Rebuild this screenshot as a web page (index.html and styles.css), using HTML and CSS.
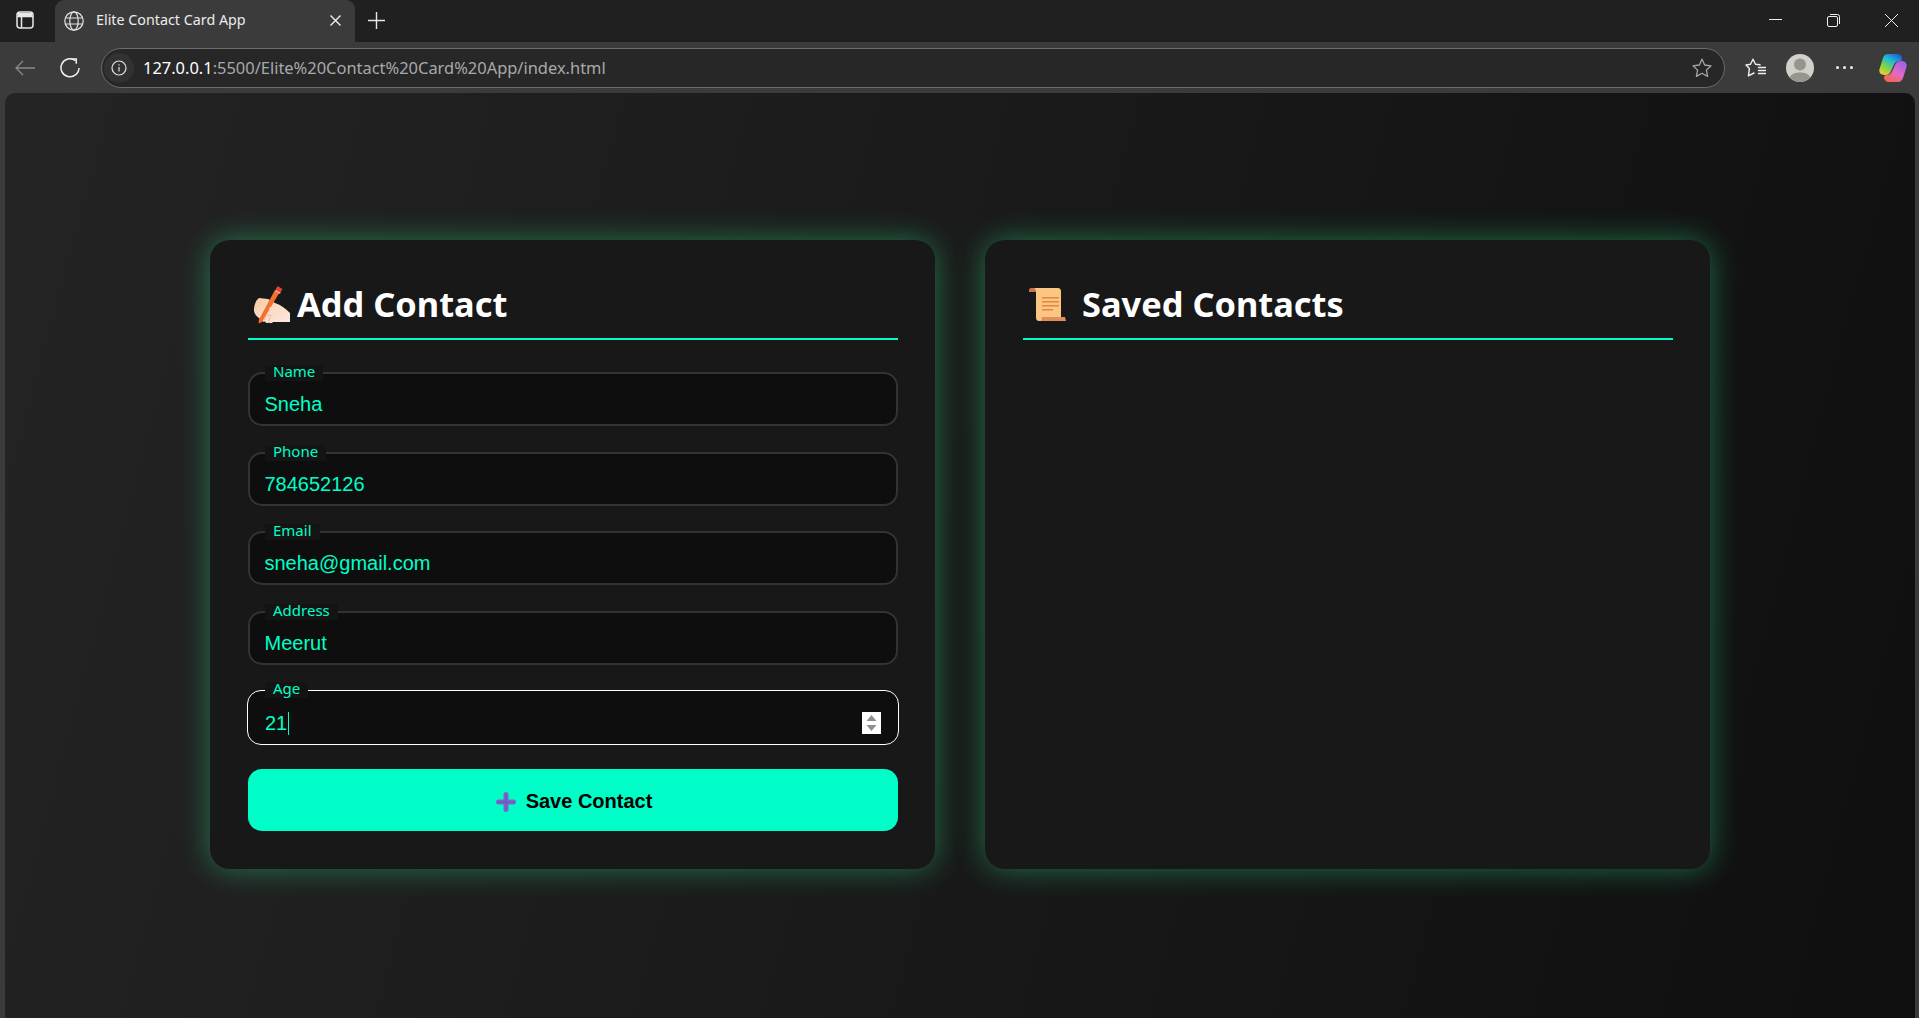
FILE: index.html
```html
<!DOCTYPE html>
<html lang="en">
<head>
    <meta charset="UTF-8">
    <meta name="viewport" content="width=device-width, initial-scale=1.0">
    <title>Elite Contact Card App</title>
    <link rel="stylesheet" href="styles.css">
</head>
<body>
    <!-- browser frame -->
    <div class="tabstrip">
        <svg class="ic-sidebar" width="18" height="18" viewBox="0 0 18 18" fill="none" stroke="#e8e8e8" stroke-width="1.5">
            <rect x="1" y="1" width="16" height="16" rx="3"/>
            <path d="M1 5.5h16M5.5 5.5V17" />
            <path d="M2 2h14v3H2z" fill="#e8e8e8" stroke="none"/>
        </svg>
        <div class="tab">
            <svg class="ic-globe" width="20" height="20" viewBox="0 0 20 20" fill="none" stroke="#e4e4e4" stroke-width="1.2">
                <circle cx="10" cy="10" r="9.2"/>
                <ellipse cx="10" cy="10" rx="4.2" ry="9.2"/>
                <path d="M1.5 7h17M1.5 13h17"/>
            </svg>
            <span class="tab-title">Elite Contact Card App</span>
            <svg class="ic-close" width="11" height="11" viewBox="0 0 11 11" stroke="#f0f0f0" stroke-width="1.4">
                <path d="M.5.5l10 10M10.5.5l-10 10"/>
            </svg>
        </div>
        <svg class="ic-plus" width="17" height="17" viewBox="0 0 17 17" stroke="#e8e8e8" stroke-width="1.4">
            <path d="M8.5 0v17M0 8.5h17"/>
        </svg>
        <div class="window-btns">
            <svg width="13" height="13" viewBox="0 0 13 13" stroke="#efefef" stroke-width="1"><path d="M0 5.5h13"/></svg>
            <svg width="13" height="13" viewBox="0 0 13 13" fill="none" stroke="#efefef" stroke-width="1"><rect x=".5" y="2.5" width="10" height="10" rx="1.5"/><path d="M3 .5h7.5a2 2 0 0 1 2 2V10"/></svg>
            <svg width="13" height="13" viewBox="0 0 13 13" stroke="#efefef" stroke-width="1"><path d="M0 0l13 13M13 0L0 13"/></svg>
        </div>
    </div>

    <div class="toolbar">
        <svg class="ic-back" width="20" height="16" viewBox="0 0 20 16" fill="none" stroke="#8a8a8a" stroke-width="1.3">
            <path d="M20 8H1M8 1L1 8l7 7"/>
        </svg>
        <svg class="ic-reload" width="20" height="20" viewBox="0 0 20 20" fill="none" stroke="#efefef" stroke-width="1.5">
            <path d="M15.5 2.6A9 9 0 1 0 19 10"/>
            <path d="M11.5 1h4.8v4.8"/>
        </svg>
        <div class="addressbar">
            <span class="info-wrap">
                <svg width="16" height="16" viewBox="0 0 16 16" fill="none" stroke="#e4e4e4" stroke-width="1.2">
                    <circle cx="8" cy="8" r="7"/>
                    <path d="M8 7v4.5M8 4.2v1.3"/>
                </svg>
            </span>
            <span class="url"><span class="url-host">127.0.0.1</span>:5500/Elite%20Contact%20Card%20App/index.html</span>
            <svg class="ic-star" width="20" height="20" viewBox="0 0 20 20" fill="none" stroke="#a8a8a8" stroke-width="1.3" stroke-linejoin="round">
                <path d="M10 1.2l2.7 5.8 6.3.8-4.6 4.3 1.2 6.3-5.6-3.1-5.6 3.1 1.2-6.3L1 7.8l6.3-.8z"/>
            </svg>
        </div>
        <svg class="ic-favs" width="21" height="20" viewBox="0 0 21 20" fill="none" stroke="#f0f0f0" stroke-width="1.4" stroke-linejoin="round" stroke-linecap="round">
            <path d="M15 6.8L10.5 6.2 8 1.2 5.5 6.2 1 7l3.4 3.600-1 7.200L9 15"/>
            <path d="M13.5 9.5h7M13.5 12.5h7M13.5 15.5h7"/>
        </svg>
        <svg class="ic-avatar" width="28" height="28" viewBox="0 0 28 28">
            <circle cx="14" cy="14" r="14" fill="#d2d0cb"/>
            <circle cx="14" cy="10.5" r="6" fill="#98948e"/>
            <path d="M3.5 23.3C6 19.5 9.500 18.500 14 18.500s8 1 10.500 4.800A14 14 0 0 1 3.500 23.300z" fill="#98948e"/>
        </svg>
        <div class="dots"><i></i><i></i><i></i></div>
        <svg class="ic-copilot" width="28" height="28" viewBox="0 0 28 28">
            <defs>
                <linearGradient id="copL" x1="0.8" y1="0" x2="0.15" y2="1">
                    <stop offset="0" stop-color="#1f5fe0"/>
                    <stop offset="0.35" stop-color="#22bcd0"/>
                    <stop offset="0.7" stop-color="#86d63f"/>
                    <stop offset="1" stop-color="#f5c92c"/>
                </linearGradient>
                <linearGradient id="copR" x1="0.85" y1="0" x2="0.15" y2="1">
                    <stop offset="0" stop-color="#9a5fe6"/>
                    <stop offset="0.5" stop-color="#e468c8"/>
                    <stop offset="1" stop-color="#f6673c"/>
                </linearGradient>
            </defs>
            <path d="M9 0h9c3 0 5 2 5 4.5 0 1.5-1 2.5-2.5 2.5-2.5 0-4.5 1-5.5 3.5L12 17c-1 2.5-3 4-5.5 4H5c-3.5 0-5.5-3-4.5-6L4 4c1-2.5 2.5-4 5-4z" fill="url(#copL)"/>
            <path d="M19 28h-9c-3 0-5-2-5-4.5C5 22 6 21 7.5 21c2.5 0 4.5-1 5.5-3.5L16 11c1-2.5 3-4 5.5-4H23c3.5 0 5.5 3 4.5 6L24 24c-1 2.5-2.500 4-5 4z" fill="url(#copR)"/>
        </svg>
    </div>

    <!-- page -->
    <main class="page">
        <section class="card">
            <h2 class="card-title">
                <svg class="emoji" width="49" height="40" viewBox="0 0 49 40">
                    <defs>
                        <linearGradient id="skin" x1="0" y1="0" x2="1" y2="1">
                            <stop offset="0" stop-color="#f8cba4"/>
                            <stop offset="1" stop-color="#fde9e2"/>
                        </linearGradient>
                    </defs>
                    <path d="M6 25c0-5 2-10 5-12l9 1 7 4c6 2 11 6 15 10v9H25c-1 1.500-3 1.500-4 .5-1.500 1-3.500.5-4-1-2 .5-4-.5-4.500-2.500C9 32 6 29 6 25z" fill="url(#skin)"/>
                    <path d="M11 34.500L27 5l4.500 2.500L14 37l-3.500 1.500z" fill="#f5702d"/>
                    <path d="M27.500 4.500l2-3.500 5 3-2 3.500z" fill="#e3402f"/>
                    <path d="M28 4.800l4.700 2.800-.8 1.300-4.700-2.800z" fill="#f1a49c"/>
                    <path d="M21 23c3-2 7-3 11-2-1 3-1 6 1 8-4 1-8 0-10-2z" fill="#fbdcc6"/>
                    <path d="M18 29c2 1.500 4 2 6 1.500M21 36l1-4M16.500 35l1-4" fill="none" stroke="#e9b79c" stroke-width="1"/>
                </svg>Add Contact
            </h2>

            <form class="contact-form">
                <fieldset class="field">
                    <legend>Name</legend>
                    <input type="text" value="Sneha">
                </fieldset>
                <fieldset class="field">
                    <legend>Phone</legend>
                    <input type="text" value="784652126">
                </fieldset>
                <fieldset class="field">
                    <legend>Email</legend>
                    <input type="text" value="sneha@gmail.com">
                </fieldset>
                <fieldset class="field">
                    <legend>Address</legend>
                    <input type="text" value="Meerut">
                </fieldset>
                <fieldset class="field field-focus">
                    <legend>Age</legend>
                    <div class="focus-value">
                        <span>21</span><span class="caret"></span>
                        <span class="spinner">
                            <svg width="19" height="22" viewBox="0 0 19 22" fill="#8f8f8f">
                                <path d="M9.5 3l5 6h-10zM4.5 13h10l-5 6z"/>
                            </svg>
                        </span>
                    </div>
                </fieldset>
                <button type="button" class="save-btn">
                    <svg width="20" height="20" viewBox="0 0 20 20" fill="none" stroke-linecap="round">
                        <path d="M10 2.5v15M2.5 10h15" stroke="#7a66c8" stroke-width="5"/>
                        <path d="M10 2.5v15M2.5 10h15" stroke="#6656bd" stroke-width="1"/>
                    </svg>
                    Save Contact
                </button>
            </form>
        </section>

        <section class="card">
            <h2 class="card-title">
                <svg class="emoji" width="59" height="40" viewBox="1 0 59 40">
                    <path d="M9 3c-1 0-2 1-2 2v2h7V3z" fill="#c9754f"/>
                    <path d="M12 3h24c1.5 0 3 1 3 3v30H17c-1.5 0-3-1-3-3V6c0-1-1-3-2-3z" fill="#fbc681"/>
                    <path d="M18 36h26l-1-4H20c0 2-1 4-2 4z" fill="#df8f5d"/>
                    <path d="M20 12h17v1.5H20zM20 16h17v1.5H20zM20 20h17v1.5H20zM20 24h11v1.5H20z" fill="#e28743"/>
                </svg>Saved Contacts
            </h2>
        </section>
    </main>
</body>
</html>
```

FILE: styles.css
```css
* {
    box-sizing: border-box;
}

html, body {
    height: 100%;
}

body {
    margin: 0;
    display: flex;
    flex-direction: column;
    background-color: #3b3b3b;
    font-family: "Noto Sans", sans-serif;
    overflow: hidden;
}

/* browser frame */

.tabstrip {
    height: 42px;
    flex: none;
    display: flex;
    align-items: center;
    background-color: #202020;
    padding-left: 16px;
}

.ic-sidebar {
    flex: none;
    margin-right: 21px;
    margin-top: -2px;
}

.tab {
    width: 300px;
    height: 42px;
    flex: none;
    display: flex;
    align-items: center;
    background-color: #3b3b3b;
    border-radius: 9px 9px 0 0;
    padding: 0 14px 0 9px;
    margin-right: 13px;
}

.tab-title {
    flex: 1;
    margin-left: 12px;
    margin-top: -4px;
    font-size: 14.3px;
    color: #ececec;
}

.ic-close {
    margin-top: -2px;
}

.ic-plus {
    margin-top: -2px;
}

.window-btns {
    margin-left: auto;
    display: flex;
    gap: 45px;
    margin-right: 21px;
    margin-top: -1px;
}

.toolbar {
    height: 51px;
    flex: none;
    display: flex;
    align-items: center;
    padding: 0 12px 0 15px;
    background-color: #3b3b3b;
}

.ic-back {
    flex: none;
    margin-right: 25px;
}

.ic-reload {
    flex: none;
    margin-right: 21px;
}

.addressbar {
    width: 1624px;
    height: 40px;
    flex: none;
    display: flex;
    align-items: center;
    background-color: #272727;
    border: 1.5px solid #6b6b6b;
    border-radius: 20px;
    padding: 0 12px 0 2px;
    margin-right: 20px;
}

.info-wrap {
    width: 30px;
    height: 30px;
    flex: none;
    display: flex;
    align-items: center;
    justify-content: center;
    border-radius: 50%;
    background-color: #323232;
    margin-right: 9px;
}

.url {
    flex: 1;
    font-size: 16.45px;
    color: #a9a9a9;
}

.url-host {
    color: #fff;
}

.ic-favs {
    flex: none;
    margin-right: 20px;
}

.ic-avatar {
    flex: none;
    margin-right: 22px;
}

.dots {
    width: 17px;
    flex: none;
    display: flex;
    justify-content: space-between;
    margin-right: 26px;
}

.dots i {
    width: 3px;
    height: 3px;
    border-radius: 50%;
    background-color: #efefef;
}

.ic-copilot {
    flex: none;
}

/* page */

.page {
    flex: 1;
    margin-left: 5px;
    margin-right: 4px;
    border-radius: 10px 10px 0 0;
    display: flex;
    justify-content: center;
    align-items: center;
    gap: 50px;
    padding-bottom: 2px;
    background: linear-gradient(105deg, #242424, #0f0f0f);
}

.card {
    width: 725px;
    height: 629px;
    background-color: #181818;
    border-radius: 20px;
    padding: 38px 37px 38px 38px;
    box-shadow: 0 0 30px rgba(50, 255, 150, 0.38);
}

.card-title {
    margin: 0 0 25px;
    height: 62px;
    display: flex;
    align-items: flex-start;
    font-size: 34.4px;
    line-height: 52px;
    font-weight: 700;
    color: #fff;
    border-bottom: 2px solid #00ffc8;
}

.emoji {
    flex: none;
    margin-top: 7px;
}

.contact-form {
    display: flex;
    flex-direction: column;
    gap: 18.5px;
}

.field {
    margin: 0;
    padding: 0 15px;
    border: 2px solid #333;
    border-radius: 14px;
    background-color: #0e0e0e;
}

.field legend {
    padding: 0 8px 4px;
    font-size: 15px;
    line-height: 12px;
    color: #00ffc8;
    background-color: #141414;
}

.field input {
    display: block;
    width: 100%;
    height: 43px;
    padding: 4px 0 0;
    margin-left: -0.5px;
    border: none;
    outline: none;
    background: none;
    font-family: "Liberation Sans", Arial, sans-serif;
    font-size: 20px;
    color: #00ffc8;
}

.field-focus {
    border: 1px solid #fff;
    margin: -1px;
    padding: 0 17px;
}

.focus-value {
    height: 46px;
    padding-top: 4px;
    display: flex;
    align-items: center;
    font-family: "Liberation Sans", Arial, sans-serif;
    font-size: 20px;
    color: #00ffc8;
}

.caret {
    width: 1px;
    height: 23px;
    margin-left: 1px;
    background-color: #00ffc8;
}

.spinner {
    width: 19px;
    height: 22px;
    margin-left: auto;
    background-color: #fff;
    display: flex;
}

.save-btn {
    height: 62px;
    margin-top: 6.5px;
    padding: 3px 0 0 2px;
    display: flex;
    align-items: center;
    justify-content: center;
    gap: 10px;
    border: none;
    border-radius: 14px;
    background-color: #00ffc8;
    color: #000;
    font-family: "Liberation Sans", Arial, sans-serif;
    font-size: 20px;
    font-weight: 700;
}
```
